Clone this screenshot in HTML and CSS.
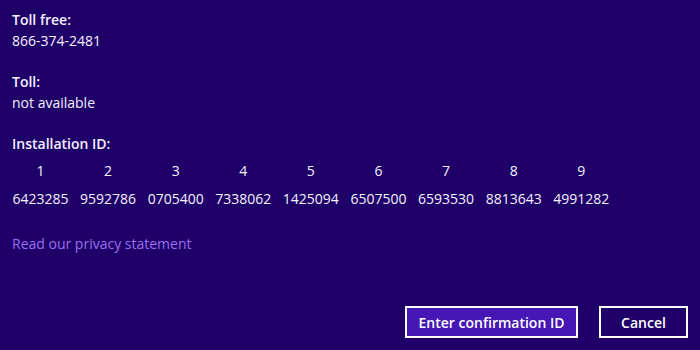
FILE: index.html
```html
<!DOCTYPE html>
<html lang="en">
<head>
    <meta charset="UTF-8">
    <meta name="viewport" content="width=device-width, initial-scale=1.0">
    <title>Activation</title>
    <link rel="stylesheet" href="styles.css">
</head>
<body>
    <div class="page">
        <div class="group">
            <div class="label">Toll free:</div>
            <div class="value">866-374-2481</div>
        </div>
        <div class="group">
            <div class="label">Toll:</div>
            <div class="value">not available</div>
        </div>
        <div class="group">
            <div class="label">Installation ID:</div>
            <div class="id-grid">
                <span class="col-num">1</span>
                <span class="col-num">2</span>
                <span class="col-num">3</span>
                <span class="col-num">4</span>
                <span class="col-num">5</span>
                <span class="col-num">6</span>
                <span class="col-num">7</span>
                <span class="col-num">8</span>
                <span class="col-num">9</span>
                <span>6423285</span>
                <span>9592786</span>
                <span>0705400</span>
                <span>7338062</span>
                <span>1425094</span>
                <span>6507500</span>
                <span>6593530</span>
                <span>8813643</span>
                <span>4991282</span>
            </div>
        </div>
        <a href="#" class="privacy">Read our privacy statement</a>

        <div class="buttons">
            <button class="primary">Enter confirmation ID</button>
            <button>Cancel</button>
        </div>
    </div>
</body>
</html>
```

FILE: styles.css
```css
html, body {
    margin: 0;
    height: 100%;
}
body {
    font-family: 'Open Sans', 'Noto Sans', sans-serif;
    font-size: 14px;
    color: #f4f0ff;
    background-color: #1f0068;
}
.page {
    display: flex;
    flex-direction: column;
    height: 100%;
    padding: 9px 12px 12px 12px;
    box-sizing: border-box;
}
.group {
    margin-bottom: 20px;
    line-height: 21px;
}
.label {
    font-weight: 600;
}
.id-grid {
    display: grid;
    grid-template-columns: repeat(9, 57px);
    column-gap: 10.6px;
    row-gap: 7px;
    margin-top: 6px;
    text-align: center;
}
.privacy {
    color: #9a6ff0;
    text-decoration: none;
    margin-top: 4px;
    line-height: 21px;
}
.buttons {
    margin-top: auto;
    display: flex;
    justify-content: flex-end;
    gap: 21px;
}
.buttons button {
    height: 32px;
    padding: 0 20px;
    border: 2px solid #ffffff;
    background-color: transparent;
    color: #ffffff;
    font-family: inherit;
    font-size: 14px;
    font-weight: 600;
    cursor: pointer;
}
.buttons button.primary {
    background-color: #4617b4;
    width: 173px;
    padding: 0;
}
.buttons button:last-child {
    width: 89px;
    padding: 0;
}
```
